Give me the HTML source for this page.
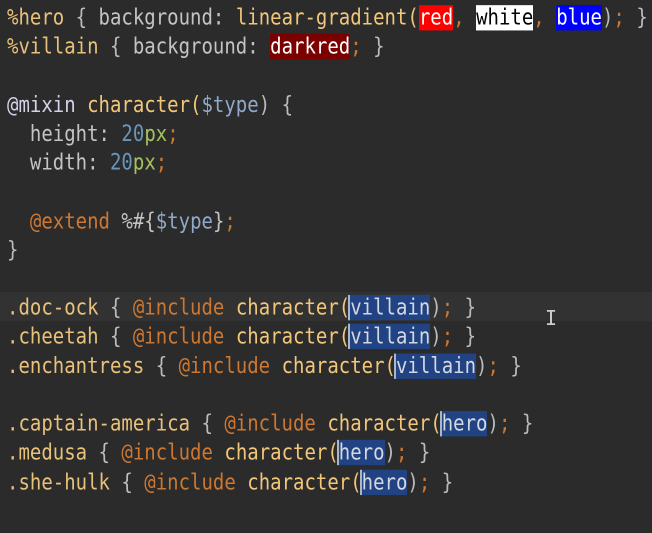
<!DOCTYPE html>
<html><head><meta charset="utf-8"><style>
html,body{margin:0;padding:0;background:#2b2b2b;width:652px;height:533px;overflow:hidden}
.c{position:absolute;left:7px;top:4px;font-family:"DejaVu Sans Mono","Liberation Mono",monospace;font-size:19px;line-height:25.22px;color:#b8bcc0;transform:scaleY(1.15);transform-origin:0 0}
.l{height:25.22px;white-space:pre}
.cur{position:absolute;left:0;top:292px;width:652px;height:29px;background:#323232}
.y{color:#e8c17a}.f{color:#f2c77a}.o{color:#cc7832}.n{color:#6897bb}.g{color:#a5c25c}.v{color:#8fa9c9}.m{color:#d6d0e8}.p{color:#c4c4c4}
.s{background:#214283;color:#d4d8e0;border-left:2px solid #a9b7c6;margin-left:-2px}
</style></head><body>
<div class="cur"></div>
<div class="c"><div class="l"><span class="y">%hero</span> { <span class="p">background:</span> <span class="f">linear-gradient(</span><span style="background:#f00;color:#fff">red</span><span class="o">,</span> <span style="background:#fff;color:#000">white</span><span class="o">,</span> <span style="background:#00f;color:#fff">blue</span>)<span class="o">;</span> }</div><div class="l"><span class="y">%villain</span> { <span class="p">background:</span> <span style="background:#7b0000;color:#fff">darkred</span><span class="o">;</span> }</div><div class="l"> </div><div class="l"><span class="m">@mixin</span> <span class="f">character(</span><span class="v">$type</span>) {</div><div class="l">  <span class="p">height:</span> <span class="n">20</span><span class="g">px</span><span class="o">;</span></div><div class="l">  <span class="p">width:</span> <span class="n">20</span><span class="g">px</span><span class="o">;</span></div><div class="l"> </div><div class="l">  <span class="o">@extend</span> <span class="p">%#{</span><span class="v">$type</span><span class="p">}</span><span class="o">;</span></div><div class="l">}</div><div class="l"> </div><div class="l"><span class="y">.doc-ock</span> { <span class="o">@include</span> <span class="f">character(</span><span class="s">villain</span>)<span class="o">;</span> }</div><div class="l"><span class="y">.cheetah</span> { <span class="o">@include</span> <span class="f">character(</span><span class="s">villain</span>)<span class="o">;</span> }</div><div class="l"><span class="y">.enchantress</span> { <span class="o">@include</span> <span class="f">character(</span><span class="s">villain</span>)<span class="o">;</span> }</div><div class="l"> </div><div class="l"><span class="y">.captain-america</span> { <span class="o">@include</span> <span class="f">character(</span><span class="s">hero</span>)<span class="o">;</span> }</div><div class="l"><span class="y">.medusa</span> { <span class="o">@include</span> <span class="f">character(</span><span class="s">hero</span>)<span class="o">;</span> }</div><div class="l"><span class="y">.she-hulk</span> { <span class="o">@include</span> <span class="f">character(</span><span class="s">hero</span>)<span class="o">;</span> }</div></div>
<div style="position:absolute;left:545px;top:306px;font-family:'DejaVu Sans Mono',monospace;font-size:20px;color:#ccc">I</div>
</body></html>
